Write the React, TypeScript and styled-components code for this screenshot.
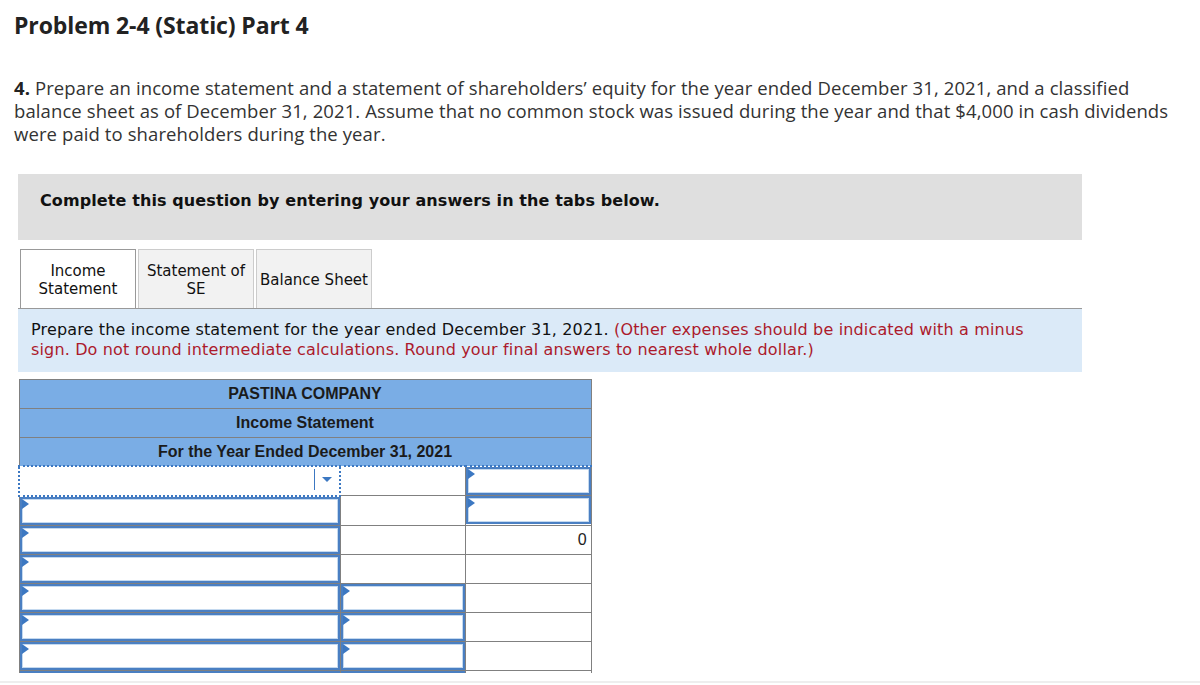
import styled, { createGlobalStyle } from 'styled-components';

const GlobalStyle = createGlobalStyle`
    body {
        margin: 0;
        background: #fff;
        color: #222;
        font-family: 'Open Sans', Lato, sans-serif;
    }
`;

const Page = styled.div`
    height: 685px;
    overflow: hidden;
    display: flex;
    flex-direction: column;
`;

const Content = styled.div`
    padding: 12px 14px 0 14px;
`;

const Title = styled.h1`
    margin: 0;
    font-size: 23px;
    line-height: 26px;
    font-weight: 700;
    color: #222;
    letter-spacing: -0.1px;
`;

const Prompt = styled.p`
    margin: 38px 0 0 0;
    font-size: 18.5px;
    line-height: 23px;
    letter-spacing: 0.1px;
    color: #333;
    max-width: 1172px;
    b {
        color: #222;
    }
`;

const Panel = styled.div`
    margin: 29px 0 0 4px;
    width: 1064px;
`;

const Notice = styled.div`
    background: #dfdfdf;
    height: 66px;
    padding: 16px 22px 0;
    box-sizing: border-box;
    font-family: 'DejaVu Sans', Verdana, sans-serif;
    font-weight: 700;
    font-size: 16px;
    letter-spacing: 0.1px;
    line-height: 22px;
    color: #111;
`;

const Tabs = styled.div`
    display: flex;
    gap: 2px;
    margin: 9px 0 0 2px;
`;

const Tab = styled.div<{ $active?: boolean }>`
    width: 116px;
    height: 59px;
    box-sizing: border-box;
    display: flex;
    align-items: center;
    justify-content: center;
    text-align: center;
    padding-top: 2px;
    font-family: 'DejaVu Sans', Verdana, sans-serif;
    font-size: 15px;
    line-height: 18px;
    color: #111;
    background: ${(p) => (p.$active ? '#fff' : '#f2f2f2')};
    border: 1px solid ${(p) => (p.$active ? '#999' : '#ccc')};
    border-bottom: none;
    margin-bottom: ${(p) => (p.$active ? '-1px' : '0')};
    position: relative;
`;

const Instructions = styled.div`
    border-top: 1px solid #999;
    background: #dbeaf8;
    padding: 11px 30px 12px 13px;
    font-family: 'DejaVu Sans', Verdana, sans-serif;
    font-size: 16px;
    letter-spacing: 0.15px;
    line-height: 20px;
    color: #111;
    span {
        color: #ac1a2c;
    }
`;

const TableClip = styled.div`
    margin-top: 7px;
    height: 294px;
    overflow: hidden;
`;

const Sheet = styled.table`
    border-collapse: collapse;
    table-layout: fixed;
    width: 572px;
    font-family: 'Liberation Sans', Arial, sans-serif;
    border: 1px solid #808080;
`;

const HeadCell = styled.th<{ $last?: boolean }>`
    background: #7aade5;
    height: ${(p) => (p.$last ? '27px' : '28px')};
    padding: 0;
    font-size: 16px;
    font-weight: 700;
    color: #1b1b1b;
    border: 1px solid #808080;
    border-bottom: ${(p) => (p.$last ? '2px dotted #3c78c2' : '1px solid #808080')};
`;

const Cell = styled.td<{ $total?: boolean }>`
    height: 28px;
    padding: 0;
    border: 1px solid #808080;
    border-top: ${(p) => (p.$total ? '1px solid #000' : '1px solid #808080')};
    font-size: 16px;
    text-align: right;
    position: relative;
`;

const Amount = styled.div`
    padding-right: 4px;
    line-height: 27px;
    color: #222;
`;

const Entry = styled.div`
    position: relative;
    height: 28px;
    box-sizing: border-box;
    border: 2px solid #4a7fc2;
    box-shadow: inset 0 0 0 1px #c4d9ef;
    background: #fff;
`;

const Marker = styled.span`
    position: absolute;
    top: 0;
    left: 0;
    width: 0;
    height: 0;
    border-left: 7px solid #3c78c2;
    border-top: 5px solid transparent;
    border-bottom: 5px solid transparent;
`;

const SelectCell = styled.td`
    height: 25px;
    padding: 0;
    border: 2px dotted #3c78c2;
    border-top: none;
`;

const Select = styled.div`
    height: 25px;
    display: flex;
    justify-content: flex-end;
    align-items: stretch;
`;

const Caret = styled.div`
    width: 24px;
    border-left: 1px solid #3c78c2;
    margin: 1px 0 3px;
    display: flex;
    align-items: center;
    justify-content: center;
    &::after {
        content: '';
        border-top: 5px solid #3c78c2;
        border-left: 5px solid transparent;
        border-right: 5px solid transparent;
    }
`;

const Footer = styled.div`
    margin-top: 8px;
    border-top: 2px solid #eeeeee;
    flex: 1;
`;

type Kind = 'input' | 'blank' | 'total';

const rows: Kind[][] = [
    ['input', 'blank', 'input'],
    ['input', 'blank', 'total'],
    ['input', 'blank', 'blank'],
    ['input', 'input', 'blank'],
    ['input', 'input', 'blank'],
    ['input', 'input', 'blank'],
    ['input', 'input', 'blank'],
    ['input', 'input', 'blank'],
];

function renderCell(kind: Kind, key: number) {
    if (kind === 'input') {
        return (
            <Cell key={key}>
                <Entry>
                    <Marker />
                </Entry>
            </Cell>
        );
    }
    if (kind === 'total') {
        return (
            <Cell key={key} $total>
                <Amount>0</Amount>
            </Cell>
        );
    }
    return <Cell key={key} />;
}

function App() {
    return (
        <Page>
            <GlobalStyle />
            <Content>
                <Title>Problem 2-4 (Static) Part 4</Title>
                <Prompt>
                    <b>4.</b> Prepare an income statement and a statement of shareholders’ equity for the
                    year ended December 31, 2021, and a classified balance sheet as of December 31, 2021.
                    Assume that no common stock was issued during the year and that $4,000 in cash
                    dividends were paid to shareholders during the year.
                </Prompt>
                <Panel>
                    <Notice>Complete this question by entering your answers in the tabs below.</Notice>
                    <Tabs>
                        <Tab $active>
                            Income
                            <br />
                            Statement
                        </Tab>
                        <Tab>
                            Statement of
                            <br />
                            SE
                        </Tab>
                        <Tab>Balance Sheet</Tab>
                    </Tabs>
                    <Instructions>
                        Prepare the income statement for the year ended December 31, 2021.{' '}
                        <span>
                            (Other expenses should be indicated with a minus sign. Do not round
                            intermediate calculations. Round your final answers to nearest whole dollar.)
                        </span>
                    </Instructions>
                    <TableClip>
                        <Sheet>
                            <colgroup>
                                <col style={{ width: 321 }} />
                                <col style={{ width: 125 }} />
                                <col style={{ width: 126 }} />
                            </colgroup>
                            <thead>
                                <tr>
                                    <HeadCell colSpan={3}>PASTINA COMPANY</HeadCell>
                                </tr>
                                <tr>
                                    <HeadCell colSpan={3}>Income Statement</HeadCell>
                                </tr>
                                <tr>
                                    <HeadCell colSpan={3} $last>
                                        For the Year Ended December 31, 2021
                                    </HeadCell>
                                </tr>
                            </thead>
                            <tbody>
                                <tr>
                                    <SelectCell>
                                        <Select>
                                            <Caret />
                                        </Select>
                                    </SelectCell>
                                    <Cell />
                                    {renderCell('input', 2)}
                                </tr>
                                {rows.map((row, i) => (
                                    <tr key={i}>{row.map((kind, j) => renderCell(kind, j))}</tr>
                                ))}
                            </tbody>
                        </Sheet>
                    </TableClip>
                </Panel>
            </Content>
            <Footer />
        </Page>
    );
}

export default App;
